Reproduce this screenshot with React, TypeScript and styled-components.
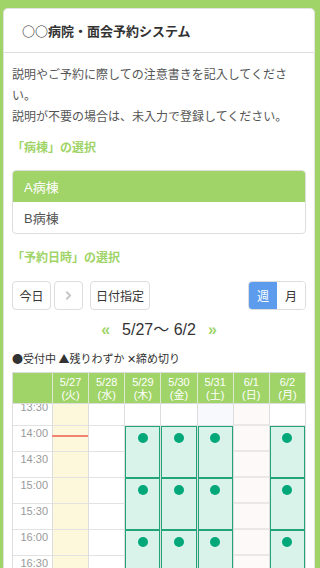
import React from 'react'
import styled, { createGlobalStyle, css } from 'styled-components'
import { ChevronRight } from 'lucide-react'

const GREEN = '#a0d468'
const CJK_FIRST = "'Noto Sans CJK JP', 'Liberation Sans', sans-serif"

const GlobalStyle = createGlobalStyle`
  html, body {
    margin: 0;
    padding: 0;
    background: ${GREEN};
    overflow: hidden;
  }
  body {
    font-family: 'Liberation Sans', 'Noto Sans CJK JP', sans-serif;
    color: #333;
  }
  * { box-sizing: border-box; }
`

type DayKind = 'today' | 'normal' | 'sat' | 'sun'

interface IDay {
  date: string
  week: string
  kind: DayKind
  open: boolean
}

const days: IDay[] = [
  { date: '5/27', week: '火', kind: 'today', open: false },
  { date: '5/28', week: '水', kind: 'normal', open: false },
  { date: '5/29', week: '木', kind: 'normal', open: true },
  { date: '5/30', week: '金', kind: 'normal', open: true },
  { date: '5/31', week: '土', kind: 'sat', open: true },
  { date: '6/1', week: '日', kind: 'sun', open: false },
  { date: '6/2', week: '月', kind: 'normal', open: true },
]

const times = ['13:30', '14:00', '14:30', '15:00', '15:30', '16:00', '16:30', '17:00', '17:30']
const hourSlots = ['14:00', '15:00', '16:00', '17:00']

const Page = styled.div`
  padding: 8px 5px 0 3px;
`

const Card = styled.div`
  background: #fff;
  border: 1px solid #e2e2e2;
  border-bottom: none;
  border-radius: 5px 5px 0 0;
`

const Header = styled.div`
  height: 44px;
  padding: 0 18px;
  border-bottom: 1px solid #ddd;
  display: flex;
  align-items: center;
`

const Title = styled.h1`
  margin: 0;
  font-family: ${CJK_FIRST};
  font-size: 13px;
  font-weight: bold;
  color: #333;
`

const Body = styled.div`
  padding: 12px 8px;
`

const Description = styled.p`
  margin: 0;
  font-size: 12px;
  line-height: 21px;
  color: #555;
`

const SectionTitle = styled.h2<{ $top: number }>`
  margin: ${(p) => p.$top}px 0 0;
  font-size: 12px;
  line-height: 18px;
  font-weight: bold;
  color: ${GREEN};
`

const ListGroup = styled.div`
  margin-top: 13px;
  border: 1px solid #ddd;
  border-radius: 4px;
  overflow: hidden;
`

const ListItem = styled.div<{ $active?: boolean }>`
  height: 31px;
  padding: 0 11px;
  display: flex;
  align-items: center;
  font-size: 13px;
  color: #555;
  ${(p) =>
    p.$active &&
    css`
      background: ${GREEN};
      color: #fff;
    `}
`

const Toolbar = styled.div`
  margin-top: 14px;
  display: flex;
  justify-content: space-between;
  align-items: center;
`

const ButtonRow = styled.div`
  display: flex;
  align-items: center;
`

const Button = styled.button<{ $width: number; $gap?: number }>`
  width: ${(p) => p.$width}px;
  height: 29px;
  margin-right: ${(p) => p.$gap || 0}px;
  padding: 0;
  border: 1px solid #ddd;
  border-radius: 4px;
  background: #fff;
  font-family: inherit;
  font-size: 12px;
  color: #333;
  display: flex;
  align-items: center;
  justify-content: center;
`

const Segment = styled.div`
  display: flex;
  border: 1px solid #ddd;
  border-radius: 4px;
  overflow: hidden;
`

const SegmentItem = styled.div<{ $active?: boolean; $width: number }>`
  width: ${(p) => p.$width}px;
  height: 27px;
  display: flex;
  align-items: center;
  justify-content: center;
  font-size: 12px;
  color: ${(p) => (p.$active ? '#fff' : '#333')};
  background: ${(p) => (p.$active ? '#5d9cec' : '#fff')};
`

const DateNav = styled.div`
  margin-top: 10px;
  display: flex;
  justify-content: center;
  align-items: center;
  gap: 12px;
  line-height: 20px;
`

const NavArrow = styled.span`
  color: ${GREEN};
  font-size: 16px;
  font-weight: bold;
`

const RangeText = styled.span`
  font-size: 16px;
  color: #333;
`

const Legend = styled.div`
  margin-top: 10px;
  font-family: ${CJK_FIRST};
  font-size: 11px;
  line-height: 16px;
  color: #333;
`

const Calendar = styled.div`
  margin-top: 6px;
  border-top: 1px solid #ddd;
  border-left: 1px solid #ddd;
`

const Columns = styled.div`
  display: grid;
  grid-template-columns: 40px repeat(7, 1fr);
`

const HeadCell = styled.div`
  height: 31px;
  padding-top: 3px;
  background: ${GREEN};
  border-right: 1px solid #dde8d3;
  border-bottom: 1px solid #ddd;
  color: #fff;
  font-size: 11px;
  line-height: 13px;
  text-align: center;
`

const Scroller = styled.div`
  height: 230px;
  overflow: hidden;
`

const ScrollInner = styled(Columns)`
  margin-top: -4px;
`

const Column = styled.div`
  display: flex;
  flex-direction: column;
  border-right: 1px solid #ddd;
`

const TimeCell = styled.div`
  height: 26px;
  padding-right: 4px;
  border-bottom: 1px solid #e2e2e2;
  font-size: 11px;
  line-height: 14px;
  color: #999;
  text-align: right;
`

const dayBg: Record<DayKind, string> = {
  today: '#fdf8dc',
  normal: '#fff',
  sat: '#f7f9fc',
  sun: '#fcf9f8',
}

const SlotCell = styled.div<{ $kind: DayKind }>`
  position: relative;
  height: 26px;
  background: ${(p) => dayBg[p.$kind]};
  border-bottom: ${(p) => (p.$kind === 'sun' ? '2px solid #ebe7e6' : '1px solid #e2e2e2')};
`

const NowLine = styled.div`
  position: absolute;
  left: -1px;
  right: 0;
  top: 9px;
  height: 2px;
  background: #f28270;
`

const Event = styled.div`
  height: 52px;
  padding-top: 6px;
  border: 1px solid #22a47a;
  background: #d9f3eb;
  display: flex;
  justify-content: center;
`

const Dot = styled.span`
  width: 10px;
  height: 10px;
  border-radius: 50%;
  background: #00a779;
`

const DayColumn: React.FC<{ day: IDay }> = ({ day }) => {
  if (day.open) {
    return (
      <Column>
        <SlotCell $kind={day.kind} />
        {hourSlots.map((t) => (
          <Event key={t}>
            <Dot />
          </Event>
        ))}
      </Column>
    )
  }
  return (
    <Column>
      {times.map((t) => (
        <SlotCell key={t} $kind={day.kind}>
          {day.kind === 'today' && t === '14:00' && <NowLine />}
        </SlotCell>
      ))}
    </Column>
  )
}

const App: React.FC = () => {
  return (
    <Page>
      <GlobalStyle />
      <Card>
        <Header>
          <Title>○○病院・面会予約システム</Title>
        </Header>
        <Body>
          <Description>
            説明やご予約に際しての注意書きを記入してください。
            <br />
            説明が不要の場合は、未入力で登録してください。
          </Description>

          <SectionTitle $top={11}>「病棟」の選択</SectionTitle>
          <ListGroup>
            <ListItem $active>A病棟</ListItem>
            <ListItem>B病棟</ListItem>
          </ListGroup>

          <SectionTitle $top={15}>「予約日時」の選択</SectionTitle>
          <Toolbar>
            <ButtonRow>
              <Button $width={39} $gap={3}>今日</Button>
              <Button $width={29} $gap={7}>
                <ChevronRight size={13} strokeWidth={3.5} color='#c6c6c6' />
              </Button>
              <Button $width={60}>日付指定</Button>
            </ButtonRow>
            <Segment>
              <SegmentItem $active $width={28}>週</SegmentItem>
              <SegmentItem $width={28}>月</SegmentItem>
            </Segment>
          </Toolbar>

          <DateNav>
            <NavArrow>«</NavArrow>
            <RangeText>5/27〜 6/2</RangeText>
            <NavArrow>»</NavArrow>
          </DateNav>

          <Legend>●受付中 ▲残りわずか ✕締め切り</Legend>

          <Calendar>
            <Columns>
              <HeadCell />
              {days.map((d) => (
                <HeadCell key={d.date}>
                  {d.date}
                  <br />({d.week})
                </HeadCell>
              ))}
            </Columns>
            <Scroller>
              <ScrollInner>
                <Column>
                  {times.map((t) => (
                    <TimeCell key={t}>{t}</TimeCell>
                  ))}
                </Column>
                {days.map((d) => (
                  <DayColumn key={d.date} day={d} />
                ))}
              </ScrollInner>
            </Scroller>
          </Calendar>
        </Body>
      </Card>
    </Page>
  )
}

export default App
